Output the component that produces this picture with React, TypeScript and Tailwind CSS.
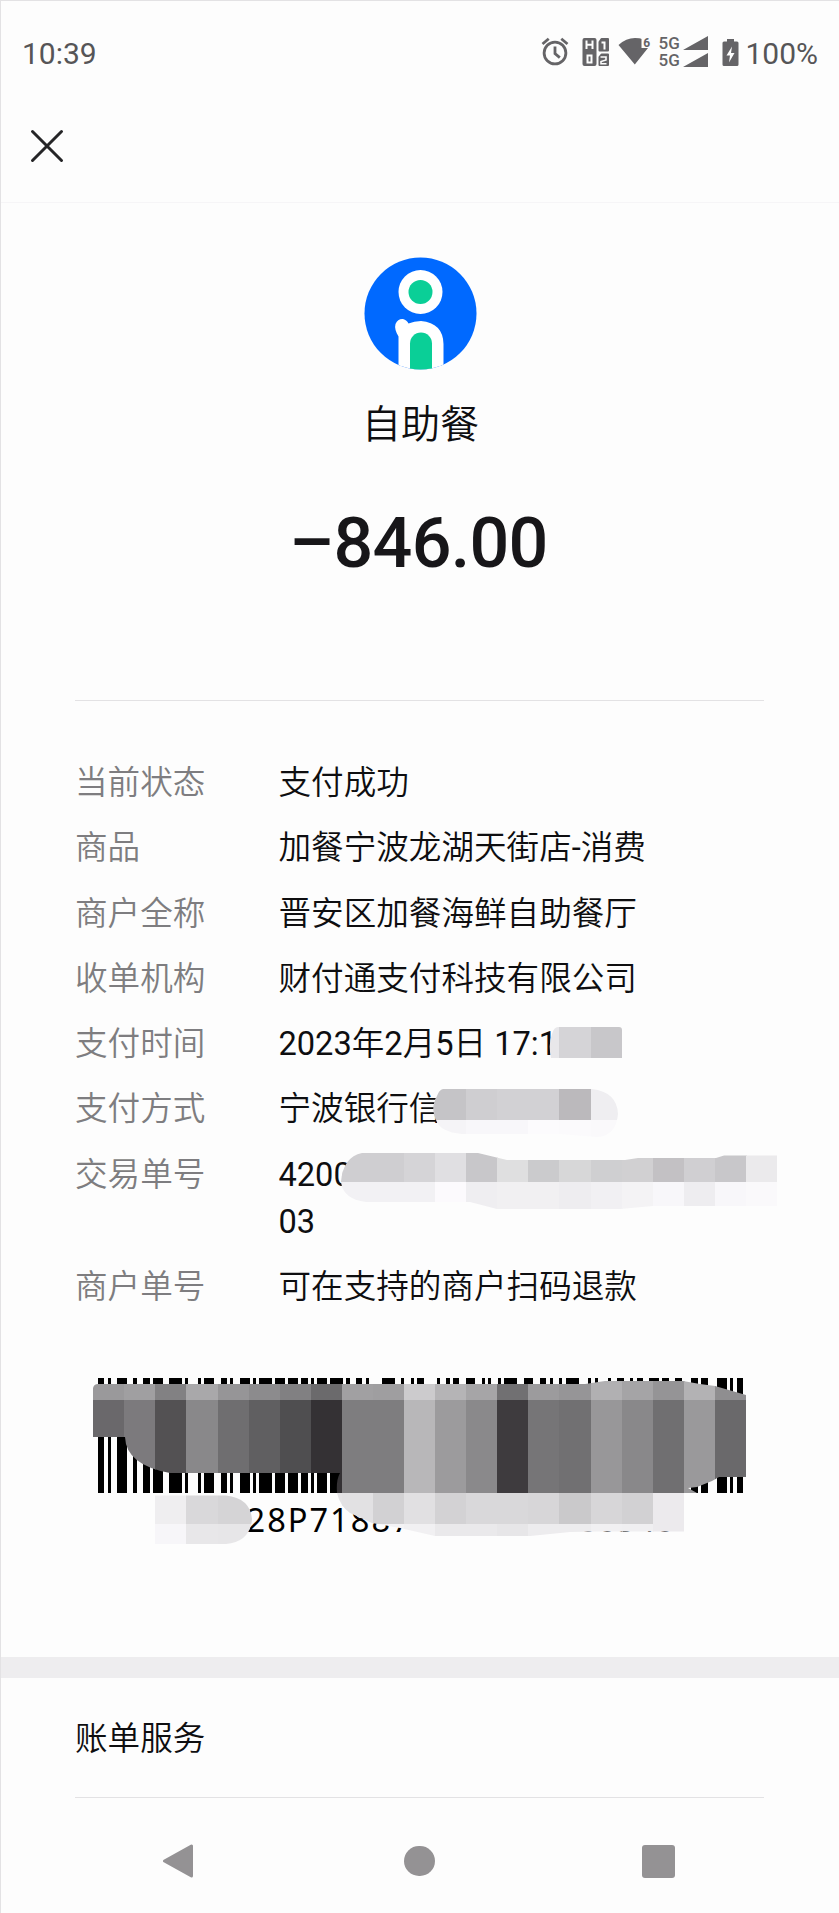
import React from "react";

const CELL = 31.08;

// [start, end] of each black bar, in modules (200 in total)
const BARS = [
  [0, 2], [3, 4], [6, 9], [11, 12], [14, 16], [17, 20], [22, 26], [27, 28], [31, 32], [33, 36],
  [38, 40], [41, 42], [44, 47], [48, 49], [50, 54], [55, 58], [59, 62], [63, 65], [66, 67], [68, 71],
  [72, 76], [77, 78], [80, 82], [83, 84], [88, 92], [94, 95], [97, 98], [99, 101], [105, 106], [108, 109],
  [110, 112], [114, 117], [119, 120], [121, 122], [124, 125], [126, 130], [132, 135], [137, 139], [140, 141],
  [143, 144], [145, 149], [152, 153], [154, 155], [158, 159], [161, 163], [165, 166], [167, 169], [171, 174],
  [175, 177], [179, 181], [184, 186], [187, 189], [192, 195], [196, 197], [198, 200],
];

type Band = { y: number; h: number; from: number; colors: string[] };

// Pixelated cover: bands of square cells cut out by a brush outline
const Mosaic = ({ id, clip, bands }: { id: string; clip: string; bands: Band[] }) => (
  <g clipPath={`url(#${id})`}>
    <clipPath id={id}>
      <path d={clip} />
    </clipPath>
    {bands.map((band) =>
      band.colors.map((color, i) => (
        <rect
          key={`${band.y}-${i}`}
          x={Math.round((band.from + i) * CELL)}
          y={band.y}
          width={32}
          height={band.h}
          fill={color}
        />
      ))
    )}
  </g>
);

const StatusBar = () => (
  <div className="flex h-[105px] items-center justify-between pl-[22px] pr-[21px] text-[30px] text-[#565557]">
    <span className="pt-px">10:39</span>
    <div className="flex items-center">
      <svg width="182" height="46" viewBox="540 30 182 46" fill="#656467">
        {/* alarm */}
        <g fill="none" stroke="#656467" strokeWidth="2.8">
          <circle cx="555" cy="53" r="10.9" />
          <path d="M555 46.5v7.2l4.8 4" />
          <path d="M542.5 44l6.2-5.2M567.5 44l-6.2-5.2" />
        </g>
        {/* HD 1 2 */}
        <rect x="582.5" y="38" width="14" height="28" rx="2" />
        <path d="M601.5 39h6.5v11.5h-8.5v-8.5zM601.5 54.5h6.5v10.5h-8.5v-8z" strokeLinejoin="round" stroke="#656467" strokeWidth="2" />
        <g fill="none" stroke="#fdfdfd" strokeWidth="2">
          <path d="M586.5 40.5v8.5M592.5 40.5v8.5M586.5 44.8h6" />
          <path d="M587.5 55.5h4v7h-4z" />
          <path d="M601.5 42.5h3v7" />
          <path d="M600.5 57h5.5v3l-5 1.5v2.2h5.5" strokeWidth="1.6" />
        </g>
        {/* wifi 6 */}
        <path d="M618.5 45Q626 38 635 38Q640 38 641.5 39V48H648L634.8 64.5z" />
        <text x="643.2" y="46.5" fontSize="12" fontWeight="700">6</text>
        {/* dual sim signal */}
        <text x="658.5" y="49" fontSize="17" fontWeight="500">5G</text>
        <text x="658.5" y="66" fontSize="17" fontWeight="500">5G</text>
        <path d="M683 50L708 36V50zM683 67L708 53V67z" />
      </svg>
      {/* battery */}
      <svg className="mr-[6px]" width="17" height="30" viewBox="0 0 17 30">
        <path d="M5 1h7v2.5h3q1.5 0 1.5 1.5v21.5q0 1.5-1.5 1.5H2q-1.5 0-1.5-1.5V5q0-1.5 1.5-1.5h3z" fill="#656467" />
        <path d="M10 8.5L4.5 17.5H8L7 24.5L12.5 15H9z" fill="#fdfdfd" />
      </svg>
      <span className="pt-px">100%</span>
    </div>
  </div>
);

const ShopLogo = () => (
  <svg width="113" height="113" viewBox="0 0 113 113">
    <clipPath id="logo">
      <circle cx="56.5" cy="56.5" r="56" />
    </clipPath>
    <g clipPath="url(#logo)">
      <rect width="113" height="113" fill="#0069ff" />
      <circle cx="56.5" cy="35" r="22" fill="#fff" />
      <circle cx="56.5" cy="35" r="12" fill="#0acf97" />
      <path d="M34.5 113V79.5Q30 72 31.5 67Q34 61.5 39 62Q43 63 44.5 66.5Q50 64 57 64Q79 66 79.5 87V113z" fill="#fff" />
      <path d="M46 113V86.5a11 11 0 0 1 22 0V113z" fill="#0acf97" />
    </g>
  </svg>
);

const ROWS = [
  ["当前状态", "支付成功"],
  ["商品", "加餐宁波龙湖天街店-消费"],
  ["商户全称", "晋安区加餐海鲜自助餐厅"],
  ["收单机构", "财付通支付科技有限公司"],
  ["支付时间", "2023年2月5日 17:1"],
  ["支付方式", "宁波银行信"],
  ["交易单号", "4200\n03"],
  ["商户单号", "可在支持的商户扫码退款"],
];

// Latin runs keep the regular weight, Chinese uses DemiLight
const Value = ({ text }: { text: string }) => (
  <div className="whitespace-pre font-[350] text-[#0e0e10]">
    {text.split(/([\x00-\x7f]+)/).map((part, i) =>
      i % 2 ? (
        <span key={i} className="font-normal">
          {part}
        </span>
      ) : (
        part
      )
    )}
  </div>
);

const Details = () => (
  <div className="relative flex flex-col gap-[18.3px] pl-[75px] pt-[59px] text-[32.6px] leading-[47px]">
    {ROWS.map(([label, value]) => (
      <div key={label} className="flex">
        <div className="w-[203.5px] shrink-0 font-[350] text-[#7e7d80]">{label}</div>
        <Value text={value} />
      </div>
    ))}
    <svg className="absolute left-0 top-0" width="839" height="600" viewBox="0 701 839 600">
      <Mosaic
        id="time"
        clip="M558 1027H619Q622 1027 622 1030V1058H551Q548 1044 552 1034Q554 1027 558 1027z"
        bands={[{ y: 1026, h: 33, from: 17, colors: ["#e8e7ea", "#d5d4d7", "#c8c7ca"] }]}
      />
      <Mosaic
        id="method"
        clip="M443 1089H592Q617 1092 618 1114Q616 1136 597 1137L560 1134H462Q440 1132 436 1120Q430 1108 437 1096Q439 1090 443 1089z"
        bands={[
          { y: 1088, h: 32, from: 13, colors: ["#c8c7ca", "#c5c4c7", "#cfced1", "#d2d1d4", "#d2d1d4", "#bbb9bc", "#efeef1"] },
          { y: 1120, h: 20, from: 13, colors: ["#f4f3f6", "#f5f4f7", "#f8f7fa", "#f8f7fa", "#fcfbfd", "#fbfafc", "#faf9fb"] },
        ]}
      />
      <Mosaic
        id="trade"
        clip="M362 1153H478L507 1160H625L638 1158H716L724 1155.5H777V1206H653L620 1209H497L470 1202H366Q343 1199 341 1182Q343 1157 362 1153z"
        bands={[
          { y: 1152, h: 30, from: 10, colors: ["#cccbce", "#cfced1", "#cfced1", "#d5d4d7", "#e0dfe2", "#c8c7ca", "#dfdfe0", "#cbcbcd", "#d7d7d8", "#cfcfd1", "#d1d0d2", "#c3c1c4", "#d0cfd2", "#c8c7ca", "#ebeaec"] },
          { y: 1182, h: 30, from: 10, colors: ["#f2f1f4", "#f2f1f4", "#f2f1f4", "#f2f1f4", "#fcfafd", "#efeef1", "#f1f0f2", "#f1f0f2", "#eeedf0", "#f1f0f3", "#f4f3f5", "#f8f7fa", "#eeedf0", "#f8f7fa", "#faf9fb"] },
        ]}
      />
    </svg>
  </div>
);

const Barcode = () => (
  <div className="relative mt-[67px] h-[279px] pl-[97.5px]">
    <svg width="645" height="116" viewBox="0 0 200 116" preserveAspectRatio="none" shapeRendering="crispEdges">
      {BARS.map(([start, end]) => (
        <rect key={start} x={start} y="0" width={end - start} height="115" />
      ))}
    </svg>
    <div className="flex pl-[149px] pt-[3px] font-['Noto_Sans'] text-[32.6px] leading-[46px] tracking-[2px] text-black">
      <span className="w-[332px]">28P71887</span>
      <span className="tracking-[0.6px]">00540</span>
    </div>
    <svg className="absolute left-0 top-0" width="839" height="200" viewBox="0 1378 839 200">
      <Mosaic
        id="bars"
        clip="M93 1388Q94 1384 98 1384H585L605 1381H683L700 1384L715 1386L746 1395V1477H719L712 1481L697 1487L688 1488L697 1493H684V1531.5H600L570 1532L530 1536H435L400 1528L372 1523L350 1513Q340 1506 337 1493Q336 1480 340 1473H170Q126 1465 125 1437H93z"
        bands={[
          { y: 1380, h: 20, from: 3, colors: ["#9a999b", "#a09fa1", "#828183", "#a9a8aa", "#969597", "#8c8b8d", "#818082", "#6b6a6c", "#a1a0a2", "#9f9ea0", "#cccbcd", "#b5b4b6", "#a6a5a7", "#717072", "#9c9b9d", "#969597", "#b1b0b2", "#a5a4a6", "#959496", "#b3b2b4", "#8f8e90"] },
          { y: 1400, h: 93, from: 3, colors: ["#6a686b", "#7c7a7d", "#535153", "#89888a", "#6f6e70", "#605f61", "#4f4e50", "#343134", "#7e7d7f", "#7e7d7f", "#b8b7b9", "#9c9b9d", "#8a898b", "#3e3b3e", "#767577", "#717072", "#989799", "#89888a", "#706f71", "#9a999b", "#6a696b"] },
          { y: 1493, h: 31, from: 10, colors: ["#e4e3e5", "#e2e1e3", "#d2d1d3", "#e1e0e2", "#d3d2d4", "#d9d8da", "#d9d8da", "#d7d6d8", "#cac9cb", "#d7d6d8", "#d2d1d3", "#eceaed"] },
          { y: 1524, h: 14, from: 10, colors: ["#f1f0f2", "#f1f0f2", "#f4f3f5", "#f1f0f2", "#eae9eb", "#eae9eb", "#e7e6e8", "#edecee", "#edecee", "#f1f0f2", "#f0eff1", "#eceaed"] },
        ]}
      />
      <Mosaic
        id="number"
        clip="M155 1495.5H226Q250 1498 252 1519Q250 1542 226 1544H155z"
        bands={[
          { y: 1494, h: 30, from: 5, colors: ["#efeef0", "#d9d8da", "#d5d4d6", "#d5d4d6"] },
          { y: 1524, h: 21, from: 5, colors: ["#f7f6f9", "#e8e7e9", "#e7e6e8", "#e7e6e8"] },
        ]}
      />
    </svg>
  </div>
);

const App = () => {
  return (
    <div className="h-[1913px] w-[839px] overflow-hidden border-l border-t border-[#e3e2e4] bg-[#fdfdfd] font-[Roboto,'Noto_Sans_CJK_SC',sans-serif]">
      {/* pull content back over the 1px frame */}
      <div className="-ml-px -mt-px flex w-[839px] flex-col">
        <StatusBar />
        <div className="flex h-[98px] items-start border-b border-[#f6f5f7] pl-[30px] pt-[24px]">
          <svg width="34" height="34" viewBox="0 0 34 34" stroke="#252527" strokeWidth="3" strokeLinecap="round">
            <path d="M2.5 2.5L31.5 31.5M31.5 2.5L2.5 31.5" />
          </svg>
        </div>

        <div className="flex h-[497px] flex-col items-center pl-[2px] pt-[54px]">
          <div className="mr-px">
            <ShopLogo />
          </div>
          <div className="mt-[27px] text-[39px] font-[350] leading-[56px] text-[#0e0e10]">自助餐</div>
          <div className="mt-[48px] pr-[4px] text-[70px] font-medium leading-[84px] tracking-[-0.7px] text-[#171619]">–846.00</div>
        </div>
        <div className="mx-[75px] h-px bg-[#e3e2e4]" />

        <Details />
        <Barcode />

        <div className="h-[21px] bg-[#eeedef]" />
        <div className="mx-[75px] flex h-[120px] items-center border-b border-[#e3e2e4] pt-[3px] text-[32.6px] font-[350] text-[#0e0e10]">
          账单服务
        </div>

        <div className="flex h-[126px] items-center justify-between pl-[163px] pr-[164px]">
          <svg width="32" height="36" viewBox="0 0 32 36" fill="#949294" stroke="#949294" strokeWidth="3" strokeLinejoin="round">
            <path d="M1.5 18L28.5 3V33z" />
          </svg>
          <div className="ml-[2px] h-[30px] w-[31px] rounded-full bg-[#949294]" />
          <div className="h-[33px] w-[33px] rounded-[3px] bg-[#949294]" />
        </div>
      </div>
    </div>
  );
};

export default App;
